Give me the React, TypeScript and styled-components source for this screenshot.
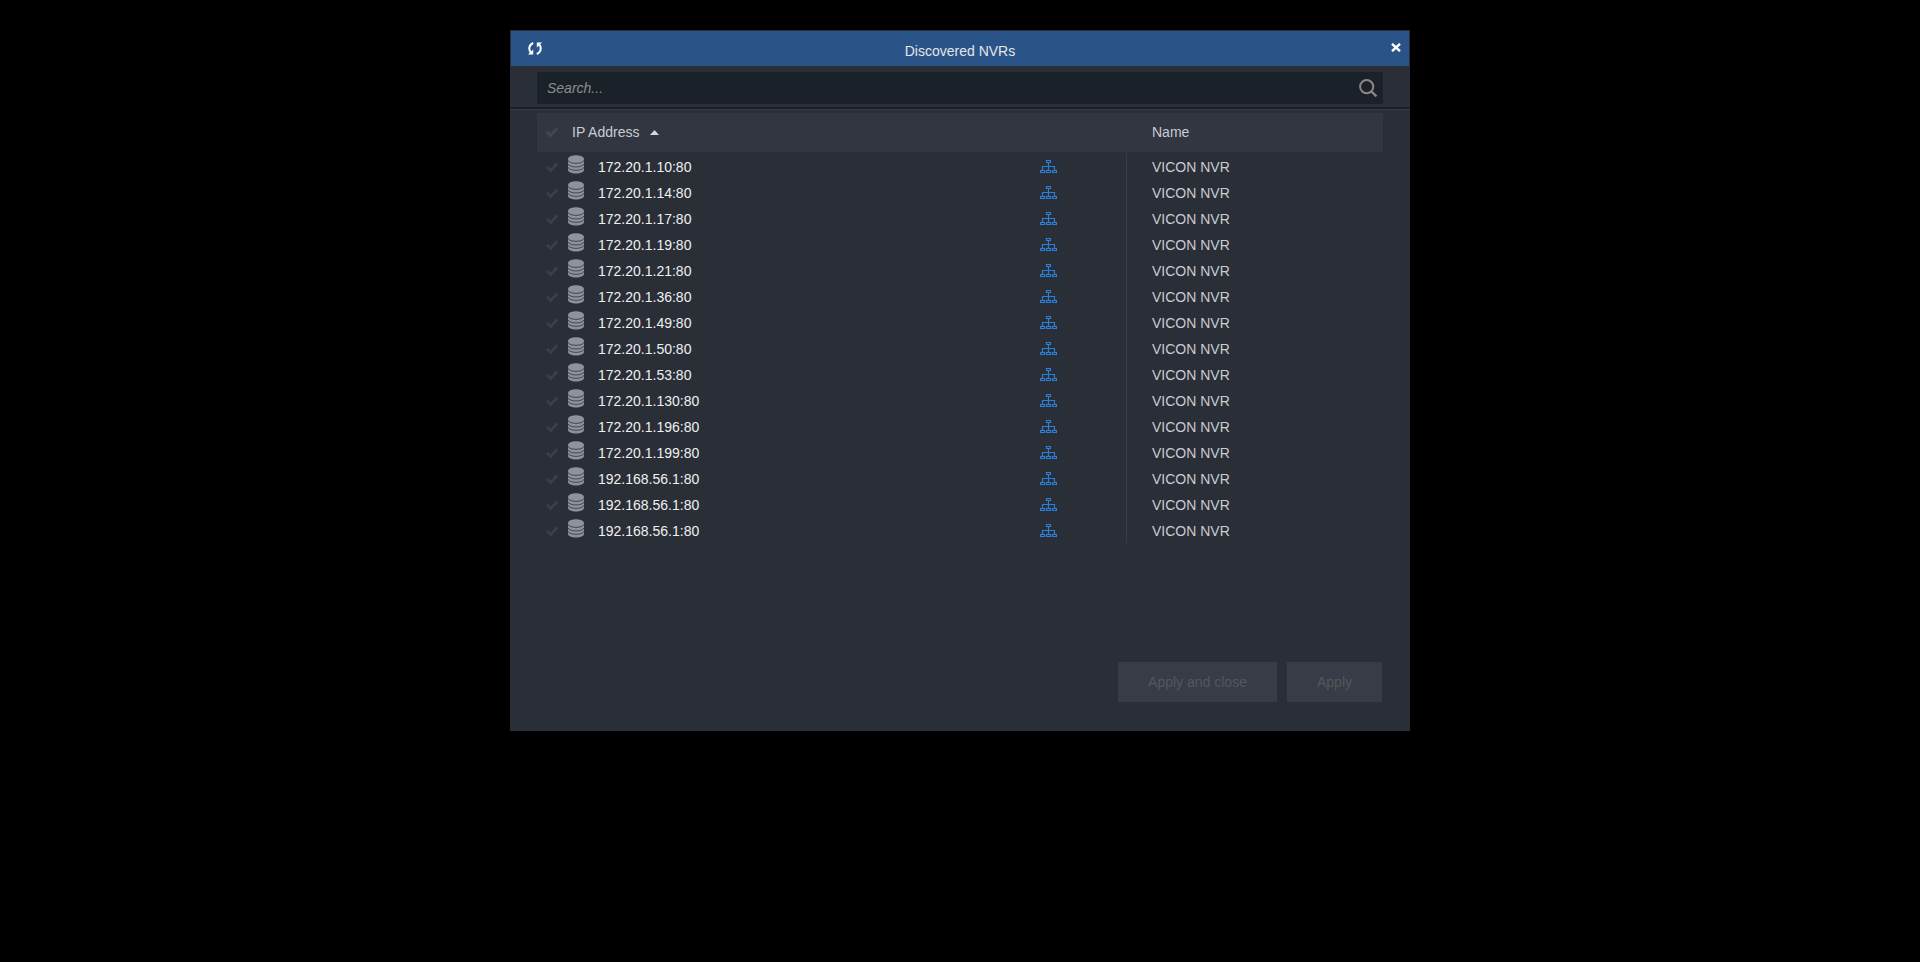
import React from 'react';
import styled, { createGlobalStyle } from 'styled-components';

const GlobalStyle = createGlobalStyle`
  body {
    margin: 0;
    background: #000;
    font-family: Arial, "Liberation Sans", sans-serif;
    font-size: 14px;
  }
`;

const Page = styled.main`
  display: flex;
  justify-content: center;
  align-items: flex-start;
  min-height: 962px;
  padding-top: 30px;
  box-sizing: border-box;
`;

const Dialog = styled.section`
  display: flex;
  flex-direction: column;
  width: 900px;
  height: 701px;
  background: #2a2e36;
`;

const TitleBar = styled.header`
  display: grid;
  grid-template-columns: 1fr auto 1fr;
  align-items: center;
  height: 35px;
  margin: 1px 1px 0;
  background: #2a5487;
  color: #fff;
`;

const Title = styled.h1`
  margin: 4px 0 0;
  font-size: 14px;
  font-weight: 400;
  line-height: 16px;
  color: #e4e6ea;
`;

const IconButton = styled.button`
  display: flex;
  padding: 0;
  border: 0;
  background: none;
  color: inherit;
`;

const RefreshButton = styled(IconButton)`
  margin: 0 0 0 17px;
`;

const CloseButton = styled(IconButton)`
  justify-self: end;
  margin: 0 8px 2px 0;
`;

const SearchArea = styled.div`
  padding: 6px 27px 3px;
  border-bottom: 2px solid #1b1e25;
`;

const SearchBox = styled.label`
  display: flex;
  align-items: center;
  height: 32px;
  padding: 0 6px 0 10px;
  background: #1b2128;
`;

const SearchInput = styled.input`
  flex: 1;
  height: 18px;
  padding: 0;
  border: 0;
  outline: 0;
  background: transparent;
  color: #ccc;
  font: italic 14px Arial, "Liberation Sans", sans-serif;
  &::placeholder {
    color: #8a8d91;
    opacity: 1;
  }
`;

const Table = styled.div`
  flex: 1;
  padding: 3px 27px 0;
  border-top: 1px solid #3a3d46;
`;

const Columns = styled.div`
  display: grid;
  grid-template-columns: 22px 567px 257px;
  align-items: center;
`;

const HeadRow = styled(Columns)`
  height: 39px;
  margin-bottom: 1px;
  background: #323640;
  color: #c9ccd4;
`;

const Row = styled(Columns)`
  height: 26px;
`;

const CheckCell = styled.div`
  display: flex;
  padding: 3px 0 0 9px;
  color: #3c3f47;
`;

const HeadCheckCell = styled(CheckCell)`
  padding-top: 0;
  color: #444751;
`;

const SortHeading = styled.div`
  display: flex;
  align-items: center;
  gap: 11px;
  padding: 0 0 1px 13px;
`;

const NameHeading = styled.div`
  padding: 0 0 1px 26px;
`;

const AddressCell = styled.div`
  display: flex;
  align-items: center;
  height: 26px;
  padding: 0 69px 0 9px;
  color: #f0f0f2;
`;

const Disk = styled.span`
  display: flex;
  margin: 0 14px 3px 0;
`;

const Address = styled.span`
  flex: 1;
  margin-top: 2px;
`;

const NameCell = styled.div`
  height: 26px;
  padding-left: 25px;
  border-left: 1px solid #3a3d46;
  box-sizing: border-box;
  line-height: 28px;
  color: #c9ccd4;
`;

const Network = styled.span`
  display: flex;
  margin-top: 1px;
`;

const Footer = styled.footer`
  display: flex;
  justify-content: flex-end;
  gap: 10px;
  padding: 0 28px 29px;
`;

const ActionButton = styled.button<{ $width: number }>`
  width: ${(p) => p.$width}px;
  height: 40px;
  padding: 0;
  border: 0;
  background: #383c46;
  color: #55575a;
  font: 14px Arial, "Liberation Sans", sans-serif;
`;

const RefreshIcon = () => (
  <svg width="14" height="13" viewBox="0 0 14 13" fill="none" stroke="currentColor" strokeWidth="2">
    <path d="M5.2 1C.8 2.8.2 7.6 3 10.8" />
    <path d="M0 12.6h5.2V7.6z" fill="currentColor" stroke="none" />
    <path d="M8.8 12c4.4-1.8 5-6.6 2.2-9.8" />
    <path d="M14 .4H8.8v5z" fill="currentColor" stroke="none" />
  </svg>
);

const CloseIcon = () => (
  <svg width="10" height="9" viewBox="0 0 10 9" stroke="currentColor" strokeWidth="2.4">
    <path d="M1 .8l8 7.4M9 .8L1 8.2" />
  </svg>
);

const SearchIcon = () => (
  <svg width="18" height="18" viewBox="0 0 18 18" fill="none" stroke="#8b8884" strokeWidth="2">
    <circle cx="7.7" cy="7.6" r="6.6" />
    <path d="M12.2 12.2l5.2 5.2" strokeWidth="2.3" />
  </svg>
);

const CheckIcon = () => (
  <svg width="13" height="11" viewBox="0 0 13 11" fill="none" stroke="currentColor" strokeWidth="2.9">
    <path d="M1 4.8l3.5 3.6L11.2 1.6" />
  </svg>
);

const DiskIcon = () => (
  <svg width="16" height="19" viewBox="0 0 16 19">
    <path d="M0 4v11c0 4.6 16 4.6 16 0V4z" fill="#8d929c" />
    <ellipse cx="8" cy="3.8" rx="8" ry="3.6" fill="#8d929c" />
    <path
      d="M0 5.2c1 4.2 15 4.2 16 0M0 8.8c1 4.2 15 4.2 16 0M0 12.2c1 4.2 15 4.2 16 0"
      fill="none"
      stroke="#2a2e36"
      strokeWidth="0.75"
    />
  </svg>
);

const NetworkIcon = () => (
  <svg width="17" height="13" viewBox="0 0 17 13" fill="none" stroke="#2a7fd8" strokeWidth="1.2">
    <path d="M6.5.5h4v2h-4zM.6 10.5h3.9v2H.6zM6.5 10.5h4v2h-4zM12.5 10.5h3.9v2h-3.9z" />
    <path d="M8.5 3v7M2.5 10V6.5h12V10" />
  </svg>
);

const SortIcon = () => (
  <svg width="9" height="5" viewBox="0 0 9 5">
    <path d="M0 5L4.5 0 9 5z" fill="#d4d6dc" />
  </svg>
);

const addresses = [
  '172.20.1.10:80',
  '172.20.1.14:80',
  '172.20.1.17:80',
  '172.20.1.19:80',
  '172.20.1.21:80',
  '172.20.1.36:80',
  '172.20.1.49:80',
  '172.20.1.50:80',
  '172.20.1.53:80',
  '172.20.1.130:80',
  '172.20.1.196:80',
  '172.20.1.199:80',
  '192.168.56.1:80',
  '192.168.56.1:80',
  '192.168.56.1:80',
];

export default function App() {
  return (
    <Page>
      <GlobalStyle />
      <Dialog>
        <TitleBar>
          <RefreshButton aria-label="Refresh">
            <RefreshIcon />
          </RefreshButton>
          <Title>Discovered NVRs</Title>
          <CloseButton aria-label="Close">
            <CloseIcon />
          </CloseButton>
        </TitleBar>
        <SearchArea>
          <SearchBox>
            <SearchInput placeholder="Search..." />
            <SearchIcon />
          </SearchBox>
        </SearchArea>
        <Table>
          <HeadRow>
            <HeadCheckCell>
              <CheckIcon />
            </HeadCheckCell>
            <SortHeading>
              IP Address
              <SortIcon />
            </SortHeading>
            <NameHeading>Name</NameHeading>
          </HeadRow>
          {addresses.map((address, i) => (
            <Row key={i}>
              <CheckCell>
                <CheckIcon />
              </CheckCell>
              <AddressCell>
                <Disk>
                  <DiskIcon />
                </Disk>
                <Address>{address}</Address>
                <Network>
                  <NetworkIcon />
                </Network>
              </AddressCell>
              <NameCell>VICON NVR</NameCell>
            </Row>
          ))}
        </Table>
        <Footer>
          <ActionButton $width={159}>Apply and close</ActionButton>
          <ActionButton $width={95}>Apply</ActionButton>
        </Footer>
      </Dialog>
    </Page>
  );
}
